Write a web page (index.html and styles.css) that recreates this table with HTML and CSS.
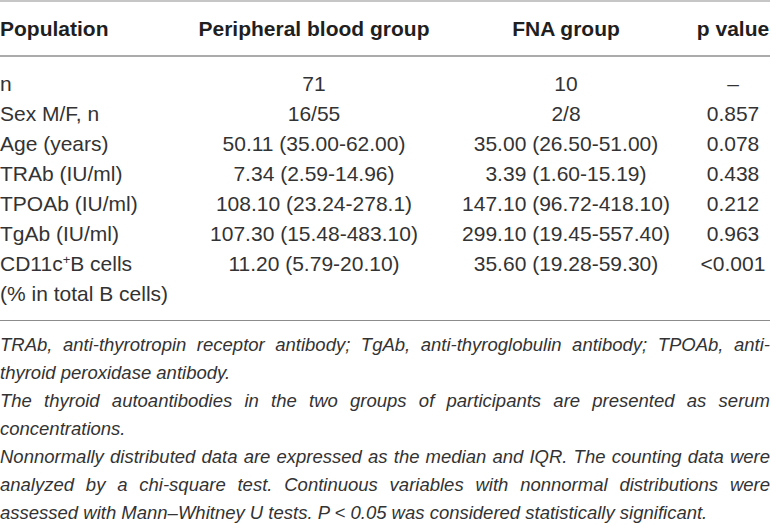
FILE: index.html
```html
<!DOCTYPE html>
<html lang="en">
<head>
  <meta charset="UTF-8">
  <meta name="viewport" content="width=device-width, initial-scale=1.0">
  <title>Participant characteristics</title>
  <link rel="stylesheet" href="styles.css">
</head>
<body>

  <!-- Table -->
  <div class="page">
    <table class="data">
      <colgroup>
        <col class="col-pop">
        <col class="col-pb">
        <col class="col-fna">
        <col class="col-p">
      </colgroup>
      <thead>
        <tr>
          <th class="label">Population</th>
          <th>Peripheral blood group</th>
          <th>FNA group</th>
          <th>p value</th>
        </tr>
      </thead>
      <tbody>
        <tr class="first">
          <td class="label">n</td>
          <td>71</td>
          <td>10</td>
          <td>–</td>
        </tr>
        <tr>
          <td class="label">Sex M/F, n</td>
          <td>16/55</td>
          <td>2/8</td>
          <td>0.857</td>
        </tr>
        <tr>
          <td class="label">Age (years)</td>
          <td>50.11 (35.00-62.00)</td>
          <td>35.00 (26.50-51.00)</td>
          <td>0.078</td>
        </tr>
        <tr>
          <td class="label">TRAb (IU/ml)</td>
          <td>7.34 (2.59-14.96)</td>
          <td>3.39 (1.60-15.19)</td>
          <td>0.438</td>
        </tr>
        <tr>
          <td class="label">TPOAb (IU/ml)</td>
          <td>108.10 (23.24-278.1)</td>
          <td>147.10 (96.72-418.10)</td>
          <td>0.212</td>
        </tr>
        <tr>
          <td class="label">TgAb (IU/ml)</td>
          <td>107.30 (15.48-483.10)</td>
          <td>299.10 (19.45-557.40)</td>
          <td>0.963</td>
        </tr>
        <tr class="last">
          <td class="label">CD11c<sup>+</sup>B cells<br>(% in total B cells)</td>
          <td>11.20 (5.79-20.10)</td>
          <td>35.60 (19.28-59.30)</td>
          <td>&lt;0.001</td>
        </tr>
      </tbody>
    </table>

    <!-- Footnotes -->
    <div class="notes">
      <p>TRAb, anti-thyrotropin receptor antibody; TgAb, anti-thyroglobulin antibody; TPOAb, anti-thyroid peroxidase antibody.</p>
      <p>The thyroid autoantibodies in the two groups of participants are presented as serum concentrations.</p>
      <p>Nonnormally distributed data are expressed as the median and IQR. The counting data were analyzed by a chi-square test. Continuous variables with nonnormal distributions were assessed with Mann–Whitney U tests. P &lt; 0.05 was considered statistically significant.</p>
    </div>
  </div>

</body>
</html>
```

FILE: styles.css
```css
/* General Styles */
body {
  font-family: 'Liberation Sans', Arial, sans-serif;
  margin: 0;
  padding: 0;
  background: #fff;
  color: #333;
}

.page {
  width: 770px;
}

/* Table Styles */
.data {
  width: 770px;
  table-layout: fixed;
  border-collapse: collapse;
  border-top: 2px solid #c6c6c6;
  font-size: 21px;
}

.col-pop { width: 192px; }
.col-pb { width: 244px; }
.col-fna { width: 260px; }
.col-p { width: 74px; }

th {
  font-weight: bold;
  color: #1f1f1f;
  line-height: 24px;
  padding: 15px 0 14px;
  text-align: center;
  white-space: nowrap;
  border-bottom: 2px solid #ababab;
}

td {
  padding: 0;
  line-height: 30px;
  text-align: center;
  vertical-align: top;
  white-space: nowrap;
}

th.label, td.label {
  text-align: left;
}

tr.first td {
  padding-top: 11.7px;
}

tr.last td {
  padding-bottom: 11.3px;
  border-bottom: 1px solid #8c8c8c;
}

sup {
  font-size: 13px;
  line-height: 0;
  vertical-align: 7px;
}

/* Footnotes */
.notes {
  padding-top: 10px;
  font-size: 18.5px;
  font-style: italic;
  line-height: 28px;
  text-align: justify;
  color: #333;
}

.notes p {
  margin: 0;
}
```
